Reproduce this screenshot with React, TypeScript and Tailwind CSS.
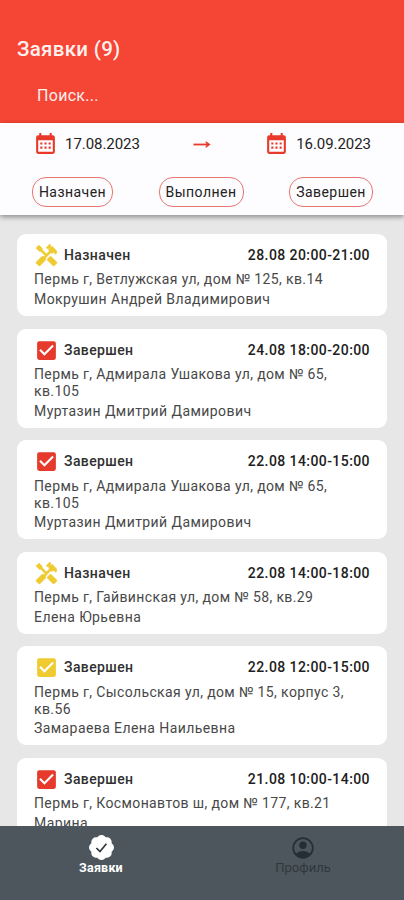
import clsx from "clsx";
import { BsPatchCheckFill } from "react-icons/bs";
import { MdCheckBox, MdHandyman } from "react-icons/md";

type Status = "assigned" | "completed";

interface Order {
  id: number;
  status: Status;
  iconColor: string;
  time: string;
  address: string;
  client: string;
}

const YELLOW = "text-[#efca31]";
const RED = "text-[#e53a2c]";

const orders: Order[] = [
  {
    id: 1,
    status: "assigned",
    iconColor: YELLOW,
    time: "28.08 20:00-21:00",
    address: "Пермь г, Ветлужская ул, дом № 125, кв.14",
    client: "Мокрушин Андрей Владимирович",
  },
  {
    id: 2,
    status: "completed",
    iconColor: RED,
    time: "24.08 18:00-20:00",
    address: "Пермь г, Адмирала Ушакова ул, дом № 65, кв.105",
    client: "Муртазин Дмитрий Дамирович",
  },
  {
    id: 3,
    status: "completed",
    iconColor: RED,
    time: "22.08 14:00-15:00",
    address: "Пермь г, Адмирала Ушакова ул, дом № 65, кв.105",
    client: "Муртазин Дмитрий Дамирович",
  },
  {
    id: 4,
    status: "assigned",
    iconColor: YELLOW,
    time: "22.08 14:00-18:00",
    address: "Пермь г, Гайвинская ул, дом № 58, кв.29",
    client: "Елена Юрьевна",
  },
  {
    id: 5,
    status: "completed",
    iconColor: YELLOW,
    time: "22.08 12:00-15:00",
    address: "Пермь г, Сысольская ул, дом № 15, корпус 3, кв.56",
    client: "Замараева Елена Наильевна",
  },
  {
    id: 6,
    status: "completed",
    iconColor: RED,
    time: "21.08 10:00-14:00",
    address: "Пермь г, Космонавтов ш, дом № 177, кв.21",
    client: "Марина",
  },
];

const CalendarIcon = () => (
  <svg viewBox="0 0 24 24" className="h-[25px] w-[25px] fill-[#e8392a]">
    <path d="M9,10V12H7V10H9M13,10V12H11V10H13M17,10V12H15V10H17M19,3A2,2 0 0,1 21,5V19A2,2 0 0,1 19,21H5C3.89,21 3,20.1 3,19V5A2,2 0 0,1 5,3H6V1H8V3H16V1H18V3H19M19,19V8H5V19H19M9,14V16H7V14H9M13,14V16H11V14H13M17,14V16H15V14H17Z" />
  </svg>
);

const ArrowIcon = () => (
  <svg viewBox="0 0 18 10" className="h-[10px] w-[18px]">
    <path className="fill-none stroke-[#e8392a] stroke-[1.8]" d="M0.5 4.5H15" />
    <path className="fill-[#e8392a]" d="M13 1.2L17.6 4.5L13 7.8L12.3 6.9L14.2 4.5L12.3 2.1Z" />
  </svg>
);

const BadgeIcon = () => (
  <div className="relative size-[25px]">
    <BsPatchCheckFill className="size-[25px] text-white" />
    <svg viewBox="0 0 25 25" className="absolute inset-0 size-[25px]">
      <circle cx="12.5" cy="12.5" r="8.5" className="fill-white" />
      <path className="fill-none stroke-[#30383e] stroke-[1.7]" d="M7.4 13L11 16.6L17.4 8.8" />
    </svg>
  </div>
);

const ProfileIcon = () => (
  <svg viewBox="0 0 24 24" className="h-[24px] w-[24px]">
    <circle cx="12" cy="12" r="9.8" className="fill-none stroke-[#252e35] stroke-[1.7]" />
    <circle cx="12" cy="9.2" r="3.7" className="fill-[#252e35]" />
    <path className="fill-[#252e35]" d="M4.8 18C6.4 15.8 9 14.9 12 14.9S17.6 15.8 19.2 18C17.6 20.3 15 21.8 12 21.8S6.4 20.3 4.8 18Z" />
  </svg>
);

const DateField = ({ value }: { value: string }) => (
  <div className="flex items-center gap-[7px]">
    <CalendarIcon />
    <span className="text-[15px] tracking-[-0.05px] text-[#222]">{value}</span>
  </div>
);

const FilterChip = ({ label, className }: { label: string; className: string }) => (
  <button
    className={clsx(
      "flex h-[30px] items-center justify-center rounded-[14px] border border-[#e77770] text-[14px] tracking-[0.45px] text-[#222]",
      className,
    )}
  >
    {label}
  </button>
);

const OrderCard = ({ order }: { order: Order }) => {
  const assigned = order.status === "assigned";

  return (
    <article className="shrink-0 rounded-[9px] bg-white px-[17px] pt-[9.6px] pb-[8px]">
      <div className="flex h-6 items-center">
        {assigned ? (
          <MdHandyman
            className={clsx("size-[25px] stroke-current stroke-[0.6] [&_path[fill=none]]:stroke-none", order.iconColor)}
          />
        ) : (
          <MdCheckBox className={clsx("size-[25px]", order.iconColor)} />
        )}
        <span className="ml-[5px] text-[14px] font-medium tracking-[0.4px] text-[#303030]">
          {assigned ? "Назначен" : "Завершен"}
        </span>
        <span className="ml-auto text-[14px] font-medium tracking-[0.42px] text-[#202020]">{order.time}</span>
      </div>
      <p className="mt-[3.9px] w-[318px] text-[14px] leading-[17px] tracking-[0.38px] text-[#484848]">
        {order.address}
      </p>
      <p className="mt-[1.5px] text-[14px] leading-[18px] tracking-[0.42px] text-[#484848]">{order.client}</p>
    </article>
  );
};

export default function App() {
  return (
    <div className="flex h-[900px] w-[404px] flex-col overflow-hidden bg-[#e7e7e7] font-['Roboto',sans-serif]">
      <header className="h-[123px] shrink-0 bg-[#f54535] pt-[36px] text-[#fff0ee]">
        <h1 className="pl-[17px] text-[20.5px] leading-[27px] font-medium tracking-[0.3px]">Заявки (9)</h1>
        <div className="mt-[21px] pl-[37px] text-[16px] leading-[23px] tracking-[0.3px]">Поиск...</div>
      </header>

      <section className="z-10 h-[92px] shrink-0 bg-[#fdfcfe] shadow-[0_2px_5px_rgba(0,0,0,0.4)]">
        <div className="mt-[9px] flex items-center justify-between pr-[33px] pl-[33px]">
          <DateField value="17.08.2023" />
          <ArrowIcon />
          <DateField value="16.09.2023" />
        </div>
        <div className="mt-[20px] flex justify-between pr-[31px] pl-[32px]">
          <FilterChip label="Назначен" className="w-[81px]" />
          <FilterChip label="Выполнен" className="w-[85px]" />
          <FilterChip label="Завершен" className="w-[84px]" />
        </div>
      </section>

      <main className="flex min-h-0 flex-1 flex-col gap-[12.6px] overflow-hidden px-[17px] pt-[19px]">
        {orders.map((order) => (
          <OrderCard key={order.id} order={order} />
        ))}
      </main>

      <nav className="flex h-[74px] shrink-0 bg-[#4d565d]">
        <div className="flex flex-1 flex-col items-center pt-[9px] text-[12.5px] leading-[15px] font-bold tracking-[0.2px] text-white">
          <BadgeIcon />
          Заявки
        </div>
        <div className="flex flex-1 flex-col items-center pt-[10px] text-[13px] leading-[15px] text-[#30383e]">
          <ProfileIcon />
          Профиль
        </div>
      </nav>
    </div>
  );
}
